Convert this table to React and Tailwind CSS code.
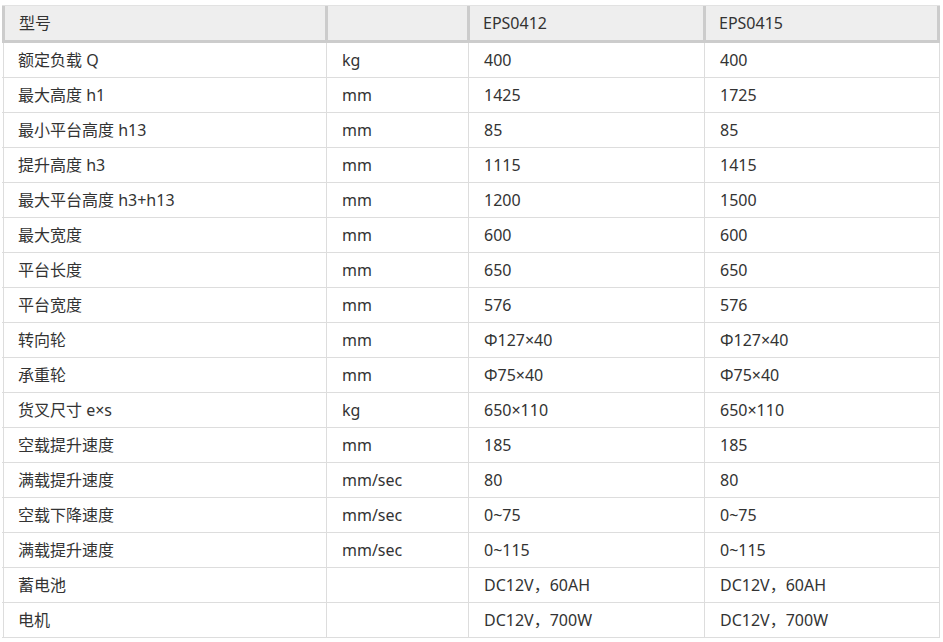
import React from "react";

const rows = [
  ["额定负载 Q", "kg", "400", "400"],
  ["最大高度 h1", "mm", "1425", "1725"],
  ["最小平台高度 h13", "mm", "85", "85"],
  ["提升高度 h3", "mm", "1115", "1415"],
  ["最大平台高度 h3+h13", "mm", "1200", "1500"],
  ["最大宽度", "mm", "600", "600"],
  ["平台长度", "mm", "650", "650"],
  ["平台宽度", "mm", "576", "576"],
  ["转向轮", "mm", "Φ127×40", "Φ127×40"],
  ["承重轮", "mm", "Φ75×40", "Φ75×40"],
  ["货叉尺寸 e×s", "kg", "650×110", "650×110"],
  ["空载提升速度", "mm", "185", "185"],
  ["满载提升速度", "mm/sec", "80", "80"],
  ["空载下降速度", "mm/sec", "0~75", "0~75"],
  ["满载提升速度", "mm/sec", "0~115", "0~115"],
  ["蓄电池", "", "DC12V，60AH", "DC12V，60AH"],
  ["电机", "", "DC12V，700W", "DC12V，700W"],
];

export default function App() {
  return (
    <div
      className="bg-white pl-[2px] pt-[5px] text-[16px] text-[#333]"
      style={{ fontFamily: '"Noto Sans", "Noto Sans CJK SC", sans-serif' }}
    >
      <div className="w-[938px]">
        <div className="flex h-[38px] bg-[#eeeeee] border-t border-t-[#e2e2e2] border-b-[3px] border-b-[#cccccc]">
          <div className="w-[323px] border-l-[3px] border-[#cccccc] pl-[14px] flex items-center">型号</div>
          <div className="w-[142px] border-l-[3px] border-[#cccccc] pl-[14px] flex items-center"></div>
          <div className="w-[236px] border-l-[3px] border-[#cccccc] pl-[13px] flex items-center">EPS0412</div>
          <div className="w-[237px] border-l-[3px] border-r-[3px] border-[#cccccc] pl-[13px] flex items-center">EPS0415</div>
        </div>
        {rows.map((r, i) => (
          <div key={i} className="flex h-[35px] border-b border-b-[#dddddd]">
            <div className="w-[323px] ml-[1px] border-l border-[#dddddd] pl-[14px] flex items-center">{r[0]}</div>
            <div className="w-[142px] border-l border-[#dddddd] pl-[15px] flex items-center">{r[1]}</div>
            <div className="w-[236px] border-l border-[#dddddd] pl-[15px] flex items-center">{r[2]}</div>
            <div className="w-[236px] border-l border-r border-[#dddddd] pl-[15px] flex items-center">{r[3]}</div>
          </div>
        ))}
      </div>
    </div>
  );
}
